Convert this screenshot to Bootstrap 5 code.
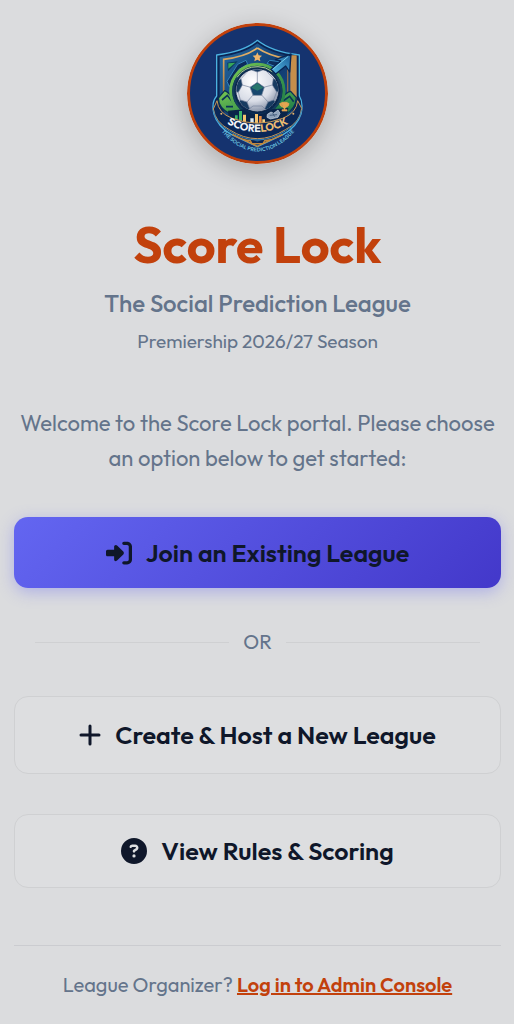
<!DOCTYPE html>
<html lang="en">
<head>
<meta charset="utf-8">
<meta name="viewport" content="width=device-width, initial-scale=1">
<title>Score Lock</title>
<link href="https://cdn.jsdelivr.net/npm/bootstrap@5.3.0/dist/css/bootstrap.min.css" rel="stylesheet">
<style>
  body { background: #dbdcde; color: #64748b; font-family: Outfit, Lato, sans-serif; }
  .portal { padding: 23px 13px 24px 14px; }
  .crest { width: 141px; height: 141px; border-radius: 50%; box-shadow: 0 6px 24px rgba(0,0,0,.22); }
  .brand { margin-top: 47px; font-size: 50px; line-height: 68px; font-weight: 700; color: #c2410c; }
  .tagline { margin-top: 6px; font-size: 24px; line-height: 36px; font-weight: 500; }
  .season { margin-top: 6px; font-size: 19px; line-height: 28px; }
  .intro { margin-top: 51px; font-size: 22px; line-height: 35px; }
  .choice { --bs-btn-color: #0f172a; --bs-btn-hover-color: #0f172a; border-radius: 14px; font-size: 25px; line-height: 36px; font-weight: 600; gap: 14px; }
  .choice-join { margin-top: 41px; min-height: 71px; border: 0; background: linear-gradient(135deg, #6366f1, #4338ca); box-shadow: 0 4px 16px rgba(99,102,241,.38); }
  .choice-plain { margin-top: 40px; background: #dddee0; border: 1px solid #cfd0d2; }
  .choice-create { min-height: 78px; }
  .choice-rules { min-height: 74px; }
  .divider { margin: 40px 21px 0; gap: 14px; font-size: 20px; line-height: 28px; }
  .divider span { flex: 1; height: 1px; background: #cfd0d2; }
  .admin { margin-top: 57px; padding-top: 24px; border-top: 1px solid #cbccd0; font-size: 20px; line-height: 30px; }
  .admin a { color: #c2410c; font-weight: 600; }
</style>
</head>
<body>
<main class="portal container-fluid text-center">
  <svg class="crest d-block mx-auto" viewBox="30 27 423 423" role="img" aria-label="Score Lock crest">
    <defs>
      <linearGradient id="shield" x1="0" y1="0" x2="1" y2="1"><stop offset="0" stop-color="#256da5"/><stop offset=".5" stop-color="#123b70"/><stop offset="1" stop-color="#1b5a96"/></linearGradient>
      <linearGradient id="gold" x1="0" y1="0" x2="0" y2="1"><stop offset="0" stop-color="#e8b46a"/><stop offset="1" stop-color="#a87336"/></linearGradient>
      <linearGradient id="arrow" x1="0" y1="1" x2="1" y2="0"><stop offset="0" stop-color="#54bde5"/><stop offset="1" stop-color="#1b5b98"/></linearGradient>
      <linearGradient id="green" x1="0" y1="0" x2="1" y2="1"><stop offset="0" stop-color="#78c852"/><stop offset="1" stop-color="#147448"/></linearGradient>
      <radialGradient id="ballShade" cx=".4" cy=".3" r=".75"><stop offset="0" stop-color="#fff"/><stop offset=".6" stop-color="#d9dde7"/><stop offset="1" stop-color="#7a869d"/></radialGradient>
      <clipPath id="ballClip"><circle cx="241" cy="229" r="63"/></clipPath>
      <path id="nameArc" d="M141 324Q241 384 343 324"/>
      <path id="mottoArc" d="M124 343Q241 482 362 343"/>
    </defs>
    <circle cx="241.500" cy="238.500" r="207" fill="#15336f" stroke="#c2410c" stroke-width="9"/>
    <!-- shield -->
    <path d="M241 79Q202 113 119 123V246Q102 266 111 300Q122 338 164 362L241 398L318 362Q360 338 372 300Q380 266 367 246V123Q283 113 241 79Z" fill="#0b2453" stroke="#4bb2e0" stroke-width="4" stroke-linejoin="round"/>
    <path d="M241 88Q204 119 128 129V260L160 340L241 384L324 340L359 260V129Q282 120 241 88Z" fill="url(#shield)"/>
    <path d="M241 102Q206 128 140 136V246M241 102Q278 126 326 133" fill="none" stroke="url(#gold)" stroke-width="5"/>
    <path d="M340 124H359V258L340 242Z" fill="#c58e4b"/>
    <path d="M330 137H334V238H330Z" fill="#8b6a4b"/>
    <path d="M151 146L182 142L153 172Z" fill="#0b3a5b"/>
    <path d="M154 148L175 146L154 164Z" fill="#37a65a"/>
    <path d="M150 202L182 151L207 139L212 151L186 166L157 218ZM270 148L278 139L307 143L295 158Z" fill="#0d2d5b" stroke="#3485bb" stroke-width="3"/>
    <path d="M241 115L245 124L255 125L248 132L250 142L241 137L232 142L234 132L227 125L237 124Z" fill="#efb56b"/>
    <!-- pitch and ring -->
    <path d="M124 252L143 230Q154 233 170 257L205 300H160Q124 283 124 252ZM358 251L341 232Q326 234 312 258L285 302H324Q357 284 358 251Z" fill="url(#green)" stroke="#0b3153" stroke-width="4"/>
    <path d="M135 258L151 244L173 272M147 278H168M318 261L338 247L350 263" fill="none" stroke="#0b3458" stroke-width="5"/>
    <circle cx="241" cy="231" r="80" fill="#0a2851" stroke="url(#green)" stroke-width="9"/>
    <circle cx="241" cy="231" r="72" fill="none" stroke="#143d5c" stroke-width="6"/>
    <path d="M180 190Q202 157 243 158Q266 158 286 173" fill="none" stroke="#b0c98b" stroke-width="3"/>
    <!-- football -->
    <circle cx="241" cy="229" r="65" fill="url(#ballShade)" stroke="#0a2346" stroke-width="3"/>
    <g clip-path="url(#ballClip)" stroke="#72819b" stroke-width="2" stroke-linejoin="round">
      <path d="M241 205L262 220L254 244H228L219 220Z" fill="#17476e"/>
      <path d="M241 207L259 221L241 230L223 221Z" fill="#28766b" stroke="none"/>
      <path d="M218 166L241 174L263 166L255 157H227ZM179 204L192 194L196 213L184 235L174 233ZM302 202L289 193L286 213L299 234L309 232ZM190 258L210 264L218 284L206 294L181 275ZM290 258L273 264L263 284L276 294L303 273Z" fill="#173b61"/>
      <path d="M241 174V207M221 220L196 213M260 220L286 213M229 242L210 264M253 242L273 264M218 166L192 194M263 166L289 193M184 235L190 258M299 234L290 258M218 284L228 276H255L263 284" fill="none"/>
    </g>
    <!-- rising arrow -->
    <path d="M282 166L311 141L295 137L342 120L338 174L326 156L296 180Z" fill="url(#arrow)" stroke="#082654" stroke-width="4" stroke-linejoin="round"/>
    <path d="M287 166L318 140L334 127" fill="none" stroke="#7dd2ec" stroke-width="3"/>
    <!-- statistics, boot and trophy -->
    <path d="M153 290L200 286Q241 316 284 286L334 282L326 330Q241 366 157 325Z" fill="#0a2449"/>
    <path d="M174 304h8v20h-8zM186 291h9v35h-9z" fill="#3bb56b"/>
    <path d="M198 302h9v27h-9zM234 300h9v30h-9z" fill="#f4c36f"/>
    <path d="M220 313h10v17h-10z" fill="#dce7ef"/><path d="M246 306h8v23h-8z" fill="#e98b42"/><path d="M256 316h8v12h-8z" fill="#f2cf7c"/>
    <path d="M271 301L282 294L290 298L303 288L309 298L303 310L280 315L270 310Z" fill="#8fa3bb" stroke="#d2dce6" stroke-width="2"/>
    <path d="M278 304L300 302M287 297L293 308" stroke="#49617f" stroke-width="3"/>
    <path d="M314 265H331Q331 280 324 283V287H330V291H315V287H321V283Q314 280 314 265ZM314 268H308Q308 278 317 279M331 268H336Q336 278 328 279" fill="#e5a551" stroke="#e5a551" stroke-width="2"/>
    <!-- name ribbon -->
    <path d="M120 260Q123 297 166 313Q241 342 317 313Q359 297 362 260L374 283Q370 325 325 347Q241 401 157 347Q115 325 109 285Z" fill="#0b2858" stroke="#c89856" stroke-width="3"/>
    <path d="M109 289Q115 328 157 351Q241 405 325 351Q366 328 374 289" fill="none" stroke="#3d86b6" stroke-width="3"/>
    <path d="M166 361Q197 379 220 380L225 389H258L263 380Q291 377 317 361L241 397Z" fill="#174c7f" stroke="#c1873e" stroke-width="4"/>
    <circle cx="133" cy="299" r="3" fill="#e8b66b"/><circle cx="349" cy="299" r="3" fill="#e8b66b"/>
    <text font-family="Outfit, Lato, sans-serif" font-weight="700" font-size="32" fill="#f4f5f8" text-anchor="middle"><textPath href="#nameArc" startOffset="50%">SCORE<tspan fill="#edbd72">LOCK</tspan></textPath></text>
    <text font-family="Outfit, Lato, sans-serif" font-weight="600" font-size="16" fill="#67bfdc" text-anchor="middle"><textPath href="#mottoArc" startOffset="50%">THE SOCIAL PREDICTION LEAGUE</textPath></text>
  </svg>

  <h1 class="brand mb-0">Score Lock</h1>
  <p class="tagline mb-0">The Social Prediction League</p>
  <p class="season mb-0">Premiership 2026/27 Season</p>
  <p class="intro mb-0">Welcome to the Score Lock portal. Please choose an option below to get started:</p>

  <button type="button" class="btn choice choice-join w-100 d-flex align-items-center justify-content-center">
    <svg width="26" height="26" viewBox="0 0 512 512" fill="currentColor" aria-hidden="true"><path d="M217.900 105.900L340.700 228.700c7.200 7.200 11.300 17.100 11.300 27.300s-4.100 20.100-11.300 27.300L217.900 406.100c-6.400 6.400-15 9.900-24 9.900c-18.700 0-33.900-15.200-33.900-33.900V320H32c-17.700 0-32-14.300-32-32v-64c0-17.700 14.300-32 32-32h128v-62.100c0-18.700 15.200-33.900 33.900-33.900c9 0 17.600 3.600 24 9.900zM352 416h64c17.700 0 32-14.300 32-32V128c0-17.700-14.300-32-32-32h-64c-17.700 0-32-14.300-32-32s14.300-32 32-32h64c53 0 96 43 96 96v256c0 53-43 96-96 96h-64c-17.700 0-32-14.300-32-32s14.300-32 32-32z"/></svg>
    Join an Existing League
  </button>

  <div class="divider d-flex align-items-center"><span></span>OR<span></span></div>

  <button type="button" class="btn choice choice-plain choice-create w-100 d-flex align-items-center justify-content-center">
    <svg width="22" height="22" viewBox="0 0 22 22" fill="none" stroke="currentColor" stroke-width="3" stroke-linecap="round" aria-hidden="true"><path d="M11 2V20M2 11H20"/></svg>
    Create &amp; Host a New League
  </button>

  <button type="button" class="btn choice choice-plain choice-rules w-100 d-flex align-items-center justify-content-center">
    <svg width="26" height="26" viewBox="0 0 512 512" fill="currentColor" aria-hidden="true"><path d="M256 512A256 256 0 1 0 256 0a256 256 0 1 0 0 512zM169.800 165.300c7.900-22.300 29.100-37.300 52.800-37.300h58.300c34.900 0 63.100 28.300 63.100 63.100c0 22.600-12.100 43.500-31.700 54.800L280 264.400c-.2 13-10.900 23.600-24 23.600c-13.300 0-24-10.700-24-24v-13.500c0-8.600 4.600-16.500 12.100-20.800l44.300-25.400c4.700-2.700 7.600-7.700 7.600-13.100c0-8.400-6.800-15.100-15.100-15.100h-58.300c-3.400 0-6.400 2.100-7.500 5.300l-.4 1.200c-4.400 12.500-18.200 19-30.600 14.600s-19-18.200-14.600-30.600zM224 352a32 32 0 1 1 64 0a32 32 0 1 1-64 0z"/></svg>
    View Rules &amp; Scoring
  </button>

  <footer class="admin">League Organizer? <a href="#admin">Log in to Admin Console</a></footer>
</main>
<script src="https://cdn.jsdelivr.net/npm/bootstrap@5.3.0/dist/js/bootstrap.bundle.min.js"></script>
</body>
</html>
